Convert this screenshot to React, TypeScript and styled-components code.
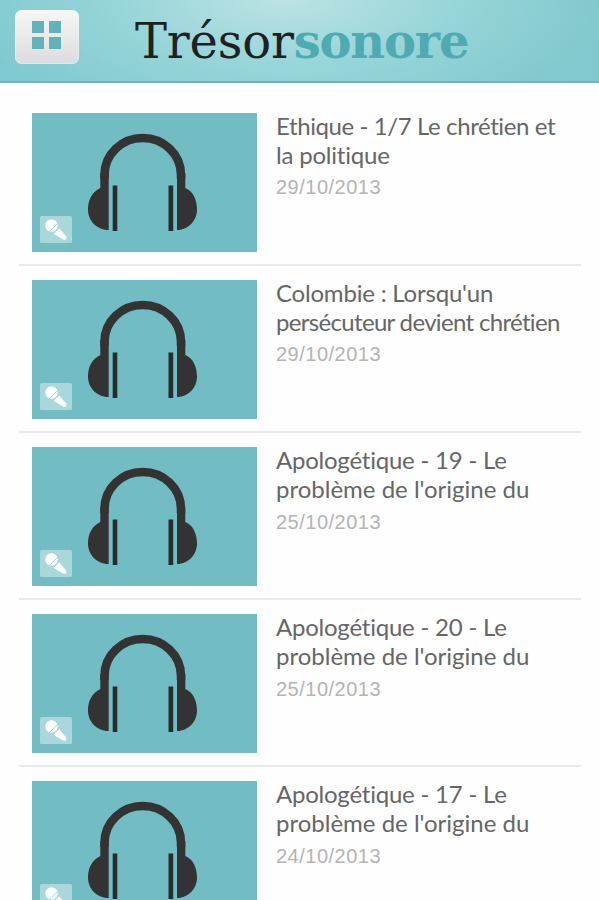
import React from "react";
import styled, { createGlobalStyle } from "styled-components";

const GlobalStyle = createGlobalStyle`
  * { box-sizing: border-box; }
  html, body { margin: 0; background: #fefefe; }
  body { height: 900px; overflow: hidden; }
`;

const Screen = styled.div`
  width: 599px;
  height: 900px;
  overflow: hidden;
  background: #fefefe;
  font-family: Lato, sans-serif;
`;

const Header = styled.header`
  height: 83px;
  display: flex;
  align-items: flex-start;
  padding: 10px 0 0 15px;
  border-bottom: 2px solid #70b4b9;
  background:
    radial-gradient(ellipse 330px 120px at 285px 0, rgba(190, 228, 228, 0.95), rgba(160, 217, 220, 0.6) 55%, rgba(130, 202, 208, 0) 100%),
    linear-gradient(90deg, #7fcad0, #8acfd5 50%, #80c8cd);
`;

const MenuButton = styled.button`
  width: 64px;
  height: 54px;
  flex: none;
  padding: 11px 18px 15px 17px;
  border: 0;
  border-radius: 7px;
  background: linear-gradient(#f7f7f7, #ebebec 45%, #dcdcde);
  box-shadow: inset 0 0 2px #fff, 0 0 1px #9fc4c7;
  display: grid;
  grid-template-columns: 12px 12px;
  grid-template-rows: 12px 12px;
  gap: 4px 5px;
`;

const Tile = styled.span`
  background: #61b3b9;
`;

const Logo = styled.h1`
  margin: 1px 0 0 56px;
  display: flex;
  font: 400 48px/60px "DejaVu Serif", serif;
  white-space: nowrap;
`;

const Word = styled.span<{ $strong?: boolean }>`
  color: ${(p) => (p.$strong ? "#4eabb1" : "#1d2221")};
  font-weight: ${(p) => (p.$strong ? 700 : 400)};
  letter-spacing: ${(p) => (p.$strong ? "-1.2px" : "-0.2px")};
`;

const List = styled.ul`
  margin: 16px 18px 0 19px;
  padding: 0;
  list-style: none;
`;

const Row = styled.li`
  height: 167px;
  padding: 14px 0 0 13px;
  display: flex;
  gap: 19px;
  border-bottom: 2px solid #e9e9e9;
`;

const Thumb = styled.div`
  position: relative;
  flex: none;
  width: 225px;
  height: 138.5px;
  background: #72bdc4;
`;

const Art = styled.svg`
  display: block;
  width: 225px;
  height: 138px;
`;

const Badge = styled.svg`
  position: absolute;
  left: 8px;
  top: 103px;
  width: 32px;
  height: 27px;
`;

const Info = styled.div`
  display: flex;
  flex-direction: column;
`;

const Title = styled.h2`
  margin: -1px 0 0;
  font-size: 24px;
  font-weight: 400;
  line-height: 28.5px;
  color: #666;
  white-space: nowrap;
  font-variant-ligatures: none;
`;

const Line = styled.span<{ $track: number }>`
  display: block;
  letter-spacing: ${(p) => p.$track}px;
`;

const DateText = styled.time<{ $drop: number }>`
  margin-top: ${(p) => p.$drop}px;
  font: 400 20px/24px "Liberation Sans", sans-serif;
  letter-spacing: 0.5px;
  color: #b4b4b4;
`;

type Item = { lines: [string, number][]; date: string; drop: number };

const items: Item[] = [
  { lines: [["Ethique - 1/7 Le chrétien et", -0.4], ["la politique", -0.2]], date: "29/10/2013", drop: 6 },
  { lines: [["Colombie : Lorsqu'un", -0.2], ["persécuteur devient chrétien", -0.67]], date: "29/10/2013", drop: 6 },
  { lines: [["Apologétique - 19 - Le", -0.22], ["problème de l'origine du", 0]], date: "25/10/2013", drop: 7 },
  { lines: [["Apologétique - 20 - Le", -0.22], ["problème de l'origine du", 0]], date: "25/10/2013", drop: 7 },
  { lines: [["Apologétique - 17 - Le", -0.22], ["problème de l'origine du", 0]], date: "24/10/2013", drop: 7 },
];

const Headphones = () => (
  <Art viewBox="0 0 225 138">
    <path d="M72.500 66V62C72.500 41 90 25 110.700 25S149 41 149 62V66" fill="none" stroke="#333334" strokeWidth="8.500" />
    <path d="M68.300 60H76.700V117C64 117 56 107 56 96.500C56 87 60 79 68.300 75Z" fill="#333334" />
    <path d="M153.300 60H145V117C157 117 165 107 165 96.500C165 87 161 78 153.300 75Z" fill="#333334" />
    <path d="M80.700 72.500H85.300V118H80.700ZM136.500 72.500H141.200V118H136.500Z" fill="#272c2d" />
  </Art>
);

const Mic = () => (
  <Badge viewBox="0 0 32 27">
    <rect width="32" height="27" rx="1.500" fill="#a9d7da" />
    <circle cx="11.500" cy="9.500" r="6.200" fill="#fff" />
    <path d="M13 17.500L19 12L26.500 21L25.500 24L23 23.500Z" fill="#fff" />
    <path d="M8.500 16.500L18.500 6.500M12.500 18.500L20 11" stroke="#a9d7da" strokeWidth="1" />
  </Badge>
);

export default function App() {
  return (
    <Screen>
      <GlobalStyle />
      <Header>
        <MenuButton aria-label="Menu">
          <Tile />
          <Tile />
          <Tile />
          <Tile />
        </MenuButton>
        <Logo>
          <Word>Trésor</Word>
          <Word $strong>sonore</Word>
        </Logo>
      </Header>
      <List>
        {items.map((item) => (
          <Row key={item.lines[0][0]}>
            <Thumb>
              <Headphones />
              <Mic />
            </Thumb>
            <Info>
              <Title>
                {item.lines.map(([text, track]) => (
                  <Line key={text} $track={track}>
                    {text}
                  </Line>
                ))}
              </Title>
              <DateText $drop={item.drop}>{item.date}</DateText>
            </Info>
          </Row>
        ))}
      </List>
    </Screen>
  );
}
